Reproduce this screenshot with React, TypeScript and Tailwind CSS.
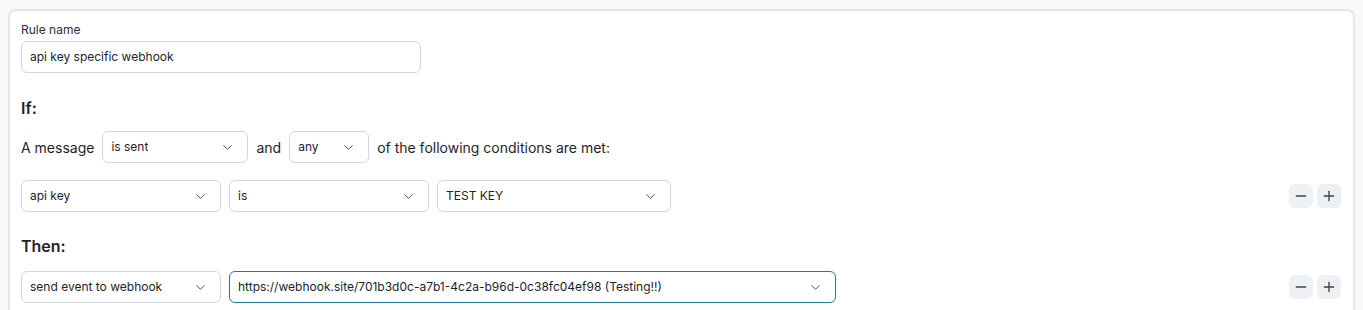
import { ChevronDown, Minus, Plus } from 'lucide-react';

function Select({ value, width, focused }: { value: string; width: string; focused?: boolean }) {
  return (
    <div
      className={`${width} h-8 flex items-center justify-between pl-2 pr-3 bg-white rounded-md border ${
        focused ? 'border-[#18808a]' : 'border-[#cfd8dd]'
      }`}
    >
      <span className="text-[12px] text-[#1f2328] truncate">{value}</span>
      <ChevronDown className="size-[15px] text-[#4a5258] shrink-0" strokeWidth={1.6} />
    </div>
  );
}

function RowButtons() {
  return (
    <div className="ml-auto flex gap-1 mr-[1px]">
      <button className="size-6 rounded-md bg-[#eef1f4] flex items-center justify-center text-[#3b4247]">
        <Minus className="size-4" strokeWidth={2} />
      </button>
      <button className="size-6 rounded-md bg-[#eef1f4] flex items-center justify-center text-[#3b4247]">
        <Plus className="size-4" strokeWidth={2} />
      </button>
    </div>
  );
}

export default function App() {
  return (
    <div className="h-[310px] bg-[#f7f9fa] pt-[9px] px-2 overflow-hidden" style={{ fontFamily: 'Inter, "Noto Sans", sans-serif' }}>
      <div className="bg-white border-2 border-b-0 border-[#e1e7ea] rounded-t-lg pt-[11px] px-[11px] pb-6 h-[320px]">
        <label className="block text-[12px] text-[#2b3136] leading-4">Rule name</label>
        <div className="mt-[3px] w-[400px] h-[32px] border border-[#cfd8dd] rounded-md flex items-center px-2 text-[12px] text-[#1f2328]">
          api key specific webhook
        </div>

        <h3 className="mt-[25px] text-[16px] font-semibold text-[#1f2328] leading-5">If:</h3>

        <div className="mt-[13px] flex items-center text-[14px] text-[#1f2328]">
          <span className="mr-2">A message</span>
          <Select value="is sent" width="w-[146px]" />
          <span className="mx-2">and</span>
          <Select value="any" width="w-[80px]" />
          <span className="ml-2">of the following conditions are met:</span>
        </div>

        <div className="mt-[17px] flex items-center gap-2">
          <Select value="api key" width="w-[200px]" />
          <Select value="is" width="w-[200px]" />
          <Select value="TEST KEY" width="w-[234px]" />
          <RowButtons />
        </div>

        <h3 className="mt-[24px] text-[16px] font-semibold text-[#1f2328] leading-5">Then:</h3>

        <div className="mt-[15px] flex items-center gap-2">
          <Select value="send event to webhook" width="w-[200px]" />
          <Select
            value="https://webhook.site/701b3d0c-a7b1-4c2a-b96d-0c38fc04ef98 (Testing!!)"
            width="w-[607px]"
            focused
          />
          <RowButtons />
        </div>
      </div>
    </div>
  );
}
